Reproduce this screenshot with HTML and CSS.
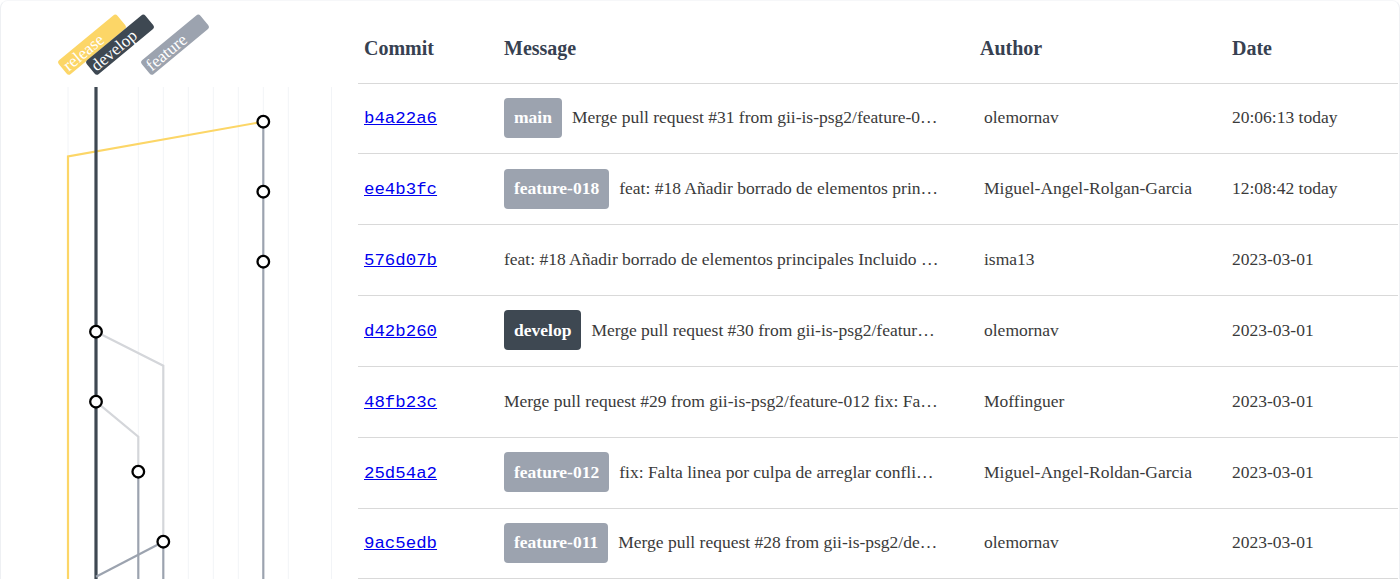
FILE: index.html
```html
<!DOCTYPE html>
<html>
<head>
<meta charset="utf-8">
<link rel="stylesheet" href="styles.css">
</head>
<body>
<div class="card">
  <div class="graph">
    <svg class="graph-svg" width="332" height="600" viewBox="1 1 332 600">
      <g class="grid">
        <line x1="68" y1="87" x2="68" y2="600"/>
        <line x1="138.3" y1="87" x2="138.3" y2="600"/>
        <line x1="163.3" y1="87" x2="163.3" y2="600"/>
        <line x1="188.3" y1="87" x2="188.3" y2="600"/>
        <line x1="213.3" y1="87" x2="213.3" y2="600"/>
        <line x1="238.3" y1="87" x2="238.3" y2="600"/>
        <line x1="263.3" y1="87" x2="263.3" y2="600"/>
        <line x1="288.3" y1="87" x2="288.3" y2="600"/>
        <line x1="331.5" y1="87" x2="331.5" y2="600"/>
      </g>
      <g class="tag">
        <g transform="translate(57,62) rotate(-39.6)">
          <rect width="76" height="18" rx="3" fill="#fcd667"/>
          <text x="3" y="15">release</text>
        </g>
        <g transform="translate(85,62) rotate(-39.6)">
          <rect width="76" height="18" rx="3" fill="#3e4852"/>
          <text x="3" y="15">develop</text>
        </g>
        <g transform="translate(140,62) rotate(-39.6)">
          <rect width="76" height="18" rx="3" fill="#9ca3af"/>
          <text x="3" y="15">feature</text>
        </g>
      </g>
      <path class="edge yellow" d="M263.3,121.7 L68,156.5 L68,600"/>
      <path class="edge develop" d="M96,87 L96,600"/>
      <path class="edge light" d="M96,331.7 L163.3,365.7 L163.3,541.7"/>
      <path class="edge light" d="M96,401.7 L138.3,436.7 L138.3,471.7"/>
      <path class="edge gray" d="M263.3,121.7 L263.3,600"/>
      <path class="edge gray" d="M138.3,471.7 L138.3,600"/>
      <path class="edge gray" d="M163.3,541.7 L163.3,600"/>
      <path class="edge gray" d="M163.3,541.7 L96,576.7"/>
      <g class="node">
        <circle cx="263.3" cy="121.7" r="5.8"/>
        <circle cx="263.3" cy="191.7" r="5.8"/>
        <circle cx="263.3" cy="261.7" r="5.8"/>
        <circle cx="96" cy="331.7" r="5.8"/>
        <circle cx="96" cy="401.7" r="5.8"/>
        <circle cx="138.3" cy="471.7" r="5.8"/>
        <circle cx="163.3" cy="541.7" r="5.8"/>
      </g>
    </svg>
  </div>
  <table class="commits">
    <colgroup>
      <col class="c-commit">
      <col class="c-message">
      <col class="c-author">
      <col class="c-date">
    </colgroup>
    <thead>
      <tr>
        <th>Commit</th>
        <th>Message</th>
        <th>Author</th>
        <th>Date</th>
      </tr>
    </thead>
    <tbody>
      <tr>
        <td><a class="sha" href="#">b4a22a6</a></td>
        <td><div class="msg"><span class="badge badge-gray">main</span><span class="msg-text">Merge pull request #31 from gii-is-psg2/feature-0…</span></div></td>
        <td class="author">olemornav</td>
        <td>20:06:13 today</td>
      </tr>
      <tr>
        <td><a class="sha" href="#">ee4b3fc</a></td>
        <td><div class="msg"><span class="badge badge-gray">feature-018</span><span class="msg-text">feat: #18 Añadir borrado de elementos prin…</span></div></td>
        <td class="author">Miguel-Angel-Rolgan-Garcia</td>
        <td>12:08:42 today</td>
      </tr>
      <tr>
        <td><a class="sha" href="#">576d07b</a></td>
        <td><div class="msg"><span class="msg-text">feat: #18 Añadir borrado de elementos principales Incluido …</span></div></td>
        <td class="author">isma13</td>
        <td>2023-03-01</td>
      </tr>
      <tr>
        <td><a class="sha" href="#">d42b260</a></td>
        <td><div class="msg"><span class="badge badge-dark">develop</span><span class="msg-text">Merge pull request #30 from gii-is-psg2/featur…</span></div></td>
        <td class="author">olemornav</td>
        <td>2023-03-01</td>
      </tr>
      <tr>
        <td><a class="sha" href="#">48fb23c</a></td>
        <td><div class="msg"><span class="msg-text">Merge pull request #29 from gii-is-psg2/feature-012 fix: Fa…</span></div></td>
        <td class="author">Moffinguer</td>
        <td>2023-03-01</td>
      </tr>
      <tr>
        <td><a class="sha" href="#">25d54a2</a></td>
        <td><div class="msg"><span class="badge badge-gray">feature-012</span><span class="msg-text">fix: Falta linea por culpa de arreglar confli…</span></div></td>
        <td class="author">Miguel-Angel-Roldan-Garcia</td>
        <td>2023-03-01</td>
      </tr>
      <tr>
        <td><a class="sha" href="#">9ac5edb</a></td>
        <td><div class="msg"><span class="badge badge-gray">feature-011</span><span class="msg-text">Merge pull request #28 from gii-is-psg2/de…</span></div></td>
        <td class="author">olemornav</td>
        <td>2023-03-01</td>
      </tr>
    </tbody>
  </table>
</div>
</body>
</html>
```
FILE: styles.css
```css
html, body {
  margin: 0;
  padding: 0;
  background: #ffffff;
  overflow: hidden;
}

body {
  font-family: "Liberation Serif", "Times New Roman", serif;
  color: #374151;
}

.card {
  display: flex;
  align-items: flex-start;
  width: 1400px;
  height: 700px;
  box-sizing: border-box;
  border: 1px solid #eef0f3;
  border-top-color: #f6f7f9;
  border-radius: 8px;
  background: #ffffff;
}

.graph {
  flex: 0 0 332px;
  width: 332px;
  height: 600px;
}

.graph-svg {
  display: block;
}

.grid line {
  stroke: #f2f4f7;
  stroke-width: 1;
}

.tag text {
  font-family: "Liberation Serif", "Times New Roman", serif;
  font-size: 17px;
  fill: #ffffff;
}

.edge {
  fill: none;
  stroke-linejoin: miter;
}

.edge.yellow {
  stroke: #fcd667;
  stroke-width: 2.2;
}

.edge.develop {
  stroke: #3e4852;
  stroke-width: 3.2;
}

.edge.light {
  stroke: #d4d6da;
  stroke-width: 2.2;
}

.edge.gray {
  stroke: #9ca3af;
  stroke-width: 2.2;
}

.node circle {
  fill: #ffffff;
  stroke: #000000;
  stroke-width: 2.3;
}

.commits {
  margin-left: 25px;
  width: 1040px;
  table-layout: fixed;
  border-collapse: collapse;
  font-size: 17.5px;
}

.c-commit { width: 140px; }
.c-message { width: 476px; }
.c-author { width: 252px; }
.c-date { width: 172px; }

.commits th {
  text-align: left;
  font-size: 20px;
  font-weight: bold;
  color: #374151;
  height: 82px;
  box-sizing: border-box;
  padding: 13px 6px 0;
  vertical-align: middle;
  border-bottom: 1px solid #d9d9d9;
}

.commits td {
  height: 70.85px;
  box-sizing: border-box;
  padding: 0 6px 1px;
  vertical-align: middle;
  border-bottom: 1px solid #d9d9d9;
  color: #3a3a3a;
  white-space: nowrap;
  overflow: hidden;
}

.commits td.author {
  padding-left: 10px;
}

.sha {
  font-family: "Liberation Mono", "Courier New", monospace;
  font-size: 17.4px;
  color: #0000ee;
  text-decoration: underline;
}

.msg {
  display: flex;
  align-items: center;
  gap: 10px;
  max-width: 440px;
}

.msg-text {
  overflow: hidden;
  white-space: nowrap;
  text-overflow: ellipsis;
  min-width: 0;
}

.badge {
  flex: 0 0 auto;
  display: inline-flex;
  align-items: center;
  height: 40px;
  padding: 0 10px;
  border-radius: 4px;
  color: #ffffff;
  font-weight: bold;
}

.badge-gray {
  background: #9ca3af;
}

.badge-dark {
  background: #3e4852;
}
```
